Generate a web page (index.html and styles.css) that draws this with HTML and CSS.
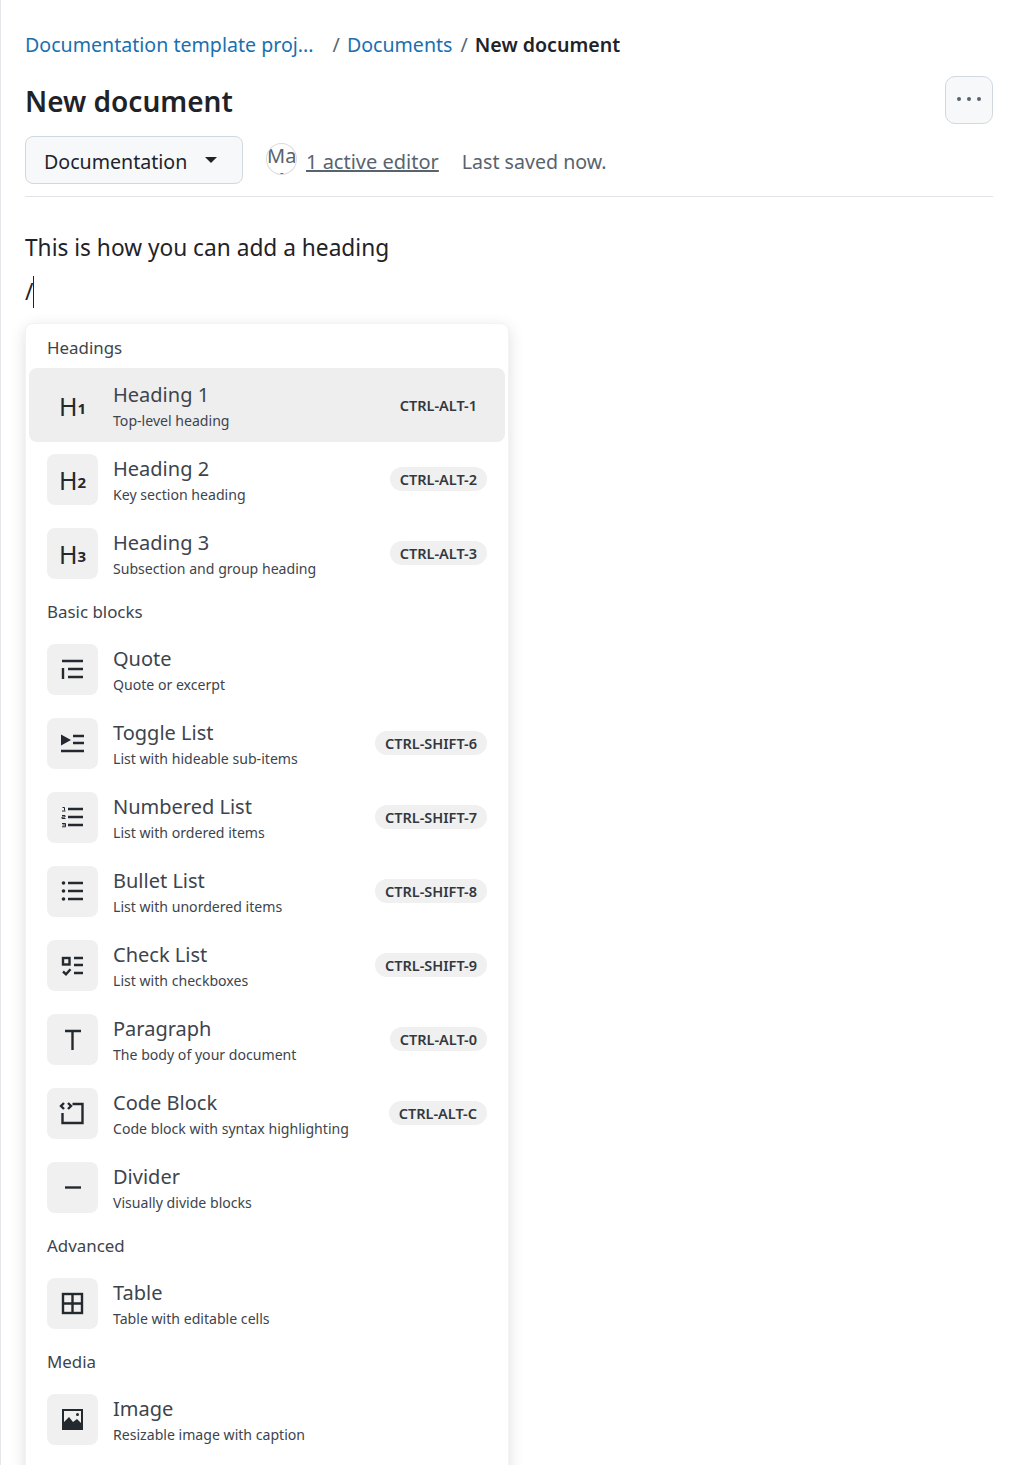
FILE: index.html
```html
<!DOCTYPE html>
<html lang="en">
<head>
<meta charset="utf-8">
<title>New document</title>
<link rel="stylesheet" href="styles.css">
</head>
<body>
<main class="page">
  <nav class="crumbs">
    <a class="crumb crumb-project">Documentation template proj...</a>
    <span class="sep sep-first">/</span>
    <a class="crumb">Documents</a>
    <span class="sep sep-last">/</span>
    <strong class="crumb-current">New document</strong>
  </nav>
  <header class="title-row">
    <h1 class="title">New document</h1>
    <button class="more" aria-label="More"><svg width="26" height="6" viewBox="0 0 26 6"><circle cx="3" cy="3" r="2"/><circle cx="13" cy="3" r="2"/><circle cx="23" cy="3" r="2"/></svg></button>
  </header>
  <div class="meta">
    <button class="picker"><span class="picker-text">Documentation</span><i class="caret"></i></button>
    <span class="avatar">Ma Ma</span>
    <a class="editors">1 active editor</a>
    <span class="saved">Last saved now.</span>
  </div>
  <section class="editor">
    <p class="line">This is how you can add a heading</p>
    <p class="line slash"><span>/</span><i class="cursor"></i></p>
  </section>
  <div class="menu">
    <div class="group">Headings</div>
    <div class="row active">
      <div class="icon"><span class="h">H</span><span class="n">1</span></div>
      <div class="label"><div class="name">Heading 1</div><div class="desc">Top-level heading</div></div>
      <kbd class="key">CTRL-ALT-1</kbd>
    </div>
    <div class="row">
      <div class="icon"><span class="h">H</span><span class="n">2</span></div>
      <div class="label"><div class="name">Heading 2</div><div class="desc">Key section heading</div></div>
      <kbd class="key">CTRL-ALT-2</kbd>
    </div>
    <div class="row">
      <div class="icon"><span class="h">H</span><span class="n">3</span></div>
      <div class="label"><div class="name">Heading 3</div><div class="desc">Subsection and group heading</div></div>
      <kbd class="key">CTRL-ALT-3</kbd>
    </div>
    <div class="group">Basic blocks</div>
    <div class="row">
      <div class="icon"><svg viewBox="0 0 51 51"><path d="M15 17h21M21 25h15M21 33h15M16 24v11"/></svg></div>
      <div class="label"><div class="name">Quote</div><div class="desc">Quote or excerpt</div></div>
    </div>
    <div class="row">
      <div class="icon"><svg viewBox="0 0 51 51"><path class="fill" d="M14 16.500l10 5.500-10 5.500z"/><path d="M26 18h11M26 25h11M14 33h23"/></svg></div>
      <div class="label"><div class="name">Toggle List</div><div class="desc">List with hideable sub-items</div></div>
      <kbd class="key">CTRL-SHIFT-6</kbd>
    </div>
    <div class="row">
      <div class="icon"><svg viewBox="0 0 51 51"><path d="M21 17h15M21 25h15M21 33h15"/><path class="thin" d="M15.500 15.500h2v3M15 19h3.500M15 23.500h3v1.500h-3v1.500h3.500M15 31.500h3.500v1.500h-3M18.500 33v1.800h-3.500"/></svg></div>
      <div class="label"><div class="name">Numbered List</div><div class="desc">List with ordered items</div></div>
      <kbd class="key">CTRL-SHIFT-7</kbd>
    </div>
    <div class="row">
      <div class="icon"><svg viewBox="0 0 51 51"><path d="M21 17h15M21 25h15M21 33h15"/><circle class="fill" cx="16.500" cy="17" r="1.800"/><circle class="fill" cx="16.500" cy="25" r="1.800"/><circle class="fill" cx="16.500" cy="33" r="1.800"/></svg></div>
      <div class="label"><div class="name">Bullet List</div><div class="desc">List with unordered items</div></div>
      <kbd class="key">CTRL-SHIFT-8</kbd>
    </div>
    <div class="row">
      <div class="icon"><svg viewBox="0 0 51 51"><path d="M27 18h9M27 25h9M27 33h9M16 31.500l3 2.800 4.500-5"/><rect class="box" x="16" y="18" width="6.500" height="6.500"/></svg></div>
      <div class="label"><div class="name">Check List</div><div class="desc">List with checkboxes</div></div>
      <kbd class="key">CTRL-SHIFT-9</kbd>
    </div>
    <div class="row">
      <div class="icon"><svg viewBox="0 0 51 51"><path d="M18 17h16M25.500 17v19"/></svg></div>
      <div class="label"><div class="name">Paragraph</div><div class="desc">The body of your document</div></div>
      <kbd class="key">CTRL-ALT-0</kbd>
    </div>
    <div class="row">
      <div class="icon"><svg viewBox="0 0 51 51"><path d="M25.500 16h10v19h-20v-10M17 15l-3 3 3 3M21 15l3 3-3 3"/></svg></div>
      <div class="label"><div class="name">Code Block</div><div class="desc">Code block with syntax highlighting</div></div>
      <kbd class="key">CTRL-ALT-C</kbd>
    </div>
    <div class="row">
      <div class="icon"><svg viewBox="0 0 51 51"><path d="M18 25.500h16"/></svg></div>
      <div class="label"><div class="name">Divider</div><div class="desc">Visually divide blocks</div></div>
    </div>
    <div class="group">Advanced</div>
    <div class="row">
      <div class="icon"><svg viewBox="0 0 51 51"><rect class="box" x="16" y="16" width="19" height="19"/><path d="M16 25.500h19M25.500 16v19"/></svg></div>
      <div class="label"><div class="name">Table</div><div class="desc">Table with editable cells</div></div>
    </div>
    <div class="group">Media</div>
    <div class="row">
      <div class="icon"><svg viewBox="0 0 51 51"><path class="fill" d="M15 15h21v21h-21z"/><path class="sky" d="M17 17h17v12l-4-4-4 3-4-5-5 5z"/><circle class="fill" cx="30.500" cy="20.500" r="1.500"/></svg></div>
      <div class="label"><div class="name">Image</div><div class="desc">Resizable image with caption</div></div>
    </div>
  </div>
</main>
</body>
</html>
```
FILE: styles.css
```css
* { box-sizing: border-box; }
html, body { margin: 0; height: 100%; overflow: hidden; background: #fff; }
body { font-family: "Noto Sans", "Open Sans", sans-serif; color: #1f2328; }
.page { height: 1465px; overflow: hidden; padding: 29px 22px 0 24px; border-left: 1px solid #e4e6e9; }
.crumbs { display: flex; align-items: center; height: 30px; font-size: 19.600px; white-space: nowrap; }
.crumb { color: #1a6fae; }
.sep { color: #59636e; margin: 0 8px; }
.sep-first { margin-left: 19px; margin-right: 7px; }
.sep-last { margin-right: 7px; }
.crumb-current { font-weight: 600; color: #1f2328; }
.title-row { display: flex; justify-content: space-between; align-items: flex-start; height: 77px; padding-top: 17px; }
.title { margin: 5px 0 0; font-size: 28px; line-height: 40px; font-weight: 600; }
.more { width: 48px; height: 48px; padding: 0; display: flex; align-items: center; justify-content: center; background: #f6f8fa; border: 1px solid #d1d9e0; border-radius: 10px; }
.more svg { fill: #59636e; margin-top: -2px; }
.meta { display: flex; align-items: center; height: 61px; padding-bottom: 13px; border-bottom: 1px solid #e1e4e8; font-size: 19.600px; }
.picker { display: flex; align-items: center; width: 218px; height: 48px; padding: 0 0 0 18px; background: #f6f8fa; border: 1px solid #d1d9e0; border-radius: 8px; color: #1f2328; font: inherit; }
.picker-text { padding-top: 3px; }
.caret { width: 0; height: 0; margin-left: 18px; border: 6px solid transparent; border-top-color: #1f2328; border-bottom: 0; }
.avatar { width: 31px; height: 32px; margin: 7px 9px 0 23px; padding: 0; overflow: hidden; border: 1px solid #d8dbdf; border-radius: 50%; color: #59636e; font-size: 20px; line-height: 24px; text-align: center; align-self: flex-start; }
.editors { padding-top: 4px; font-size: 20px; color: #59636e; text-decoration: underline; }
.saved { padding-top: 4px; margin-left: 23px; color: #59636e; }
.editor { padding-top: 29px; font-size: 22.700px; }
.line { margin: 0; height: 44px; line-height: 44px; }
.slash { display: flex; align-items: center; }
.cursor { width: 1px; height: 32px; background: #1f2328; }
.menu { width: 484px; margin-top: 9px; padding: 2px 3px 30px; background: #fff; border: 1px solid #f3f3f3; border-radius: 8px; box-shadow: 0 4px 16px rgba(0, 0, 0, .13); }
.group { height: 42px; padding: 1px 0 0 18px; font-size: 16.900px; line-height: 42px; color: #3d444d; }
.row { display: flex; align-items: center; height: 74px; padding: 0 18px; border-radius: 8px; }
.active { background: #eeeeee; }
.icon { flex: none; display: flex; align-items: center; justify-content: center; width: 51px; height: 51px; margin-right: 15px; background: #f0f0f0; border-radius: 8px; color: #24292f; }
.active .icon { background: transparent; }
.icon svg { width: 51px; height: 51px; fill: none; stroke: #24292f; stroke-width: 2.400; }
.icon .fill { fill: #24292f; stroke: none; }
.icon .thin { stroke-width: 1; }
.icon .box { fill: none; }
.icon .sky { fill: #f0f0f0; stroke: none; }
.h { font-size: 25px; line-height: 30px; margin-top: 1px; }
.n { font-size: 15px; font-weight: 700; line-height: 30px; margin-top: 5px; }
.label { flex: 1; min-width: 0; margin-top: 2px; }
.name { font-size: 20px; line-height: 28px; color: #3d444d; }
.desc { margin-top: 2px; font-size: 14.100px; line-height: 20px; color: #3d444d; white-space: nowrap; }
.key { flex: none; padding: 0 10px; height: 24px; border-radius: 12px; background: #f0f0f0; font-family: "Noto Sans", sans-serif; font-size: 14.500px; font-weight: 600; line-height: 25px; color: #32383f; }
.active .key { background: transparent; }
```
